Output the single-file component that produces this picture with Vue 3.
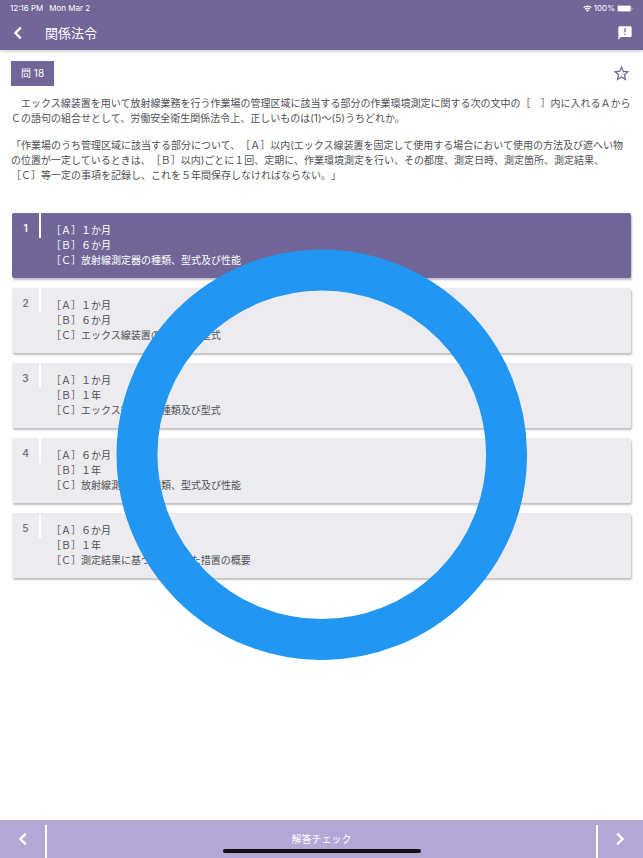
<script setup>
import { ref } from 'vue'

const selected = ref(1)

const choices = [
  { id: 1, lines: ['［Ａ］１か月', '［Ｂ］６か月', '［Ｃ］放射線測定器の種類、型式及び性能'] },
  { id: 2, lines: ['［Ａ］１か月', '［Ｂ］６か月', '［Ｃ］エックス線装置の種類及び型式'] },
  { id: 3, lines: ['［Ａ］１か月', '［Ｂ］１年', '［Ｃ］エックス線装置の種類及び型式'] },
  { id: 4, lines: ['［Ａ］６か月', '［Ｂ］１年', '［Ｃ］放射線測定器の種類、型式及び性能'] },
  { id: 5, lines: ['［Ａ］６か月', '［Ｂ］１年', '［Ｃ］測定結果に基づいて講じた措置の概要'] },
]
</script>

<template>
  <div class="page">
    <header class="header">
      <div class="status">
        <span>12:16 PM</span>
        <span>Mon Mar 2</span>
        <span class="status-right">
          <svg class="wifi" viewBox="0 0 18 14" aria-hidden="true">
            <path d="M1.3 5.2a11 11 0 0 1 15.4 0M4.2 8.4a7 7 0 0 1 9.6 0" fill="none" stroke="currentColor" stroke-width="2.4" />
            <path d="M9 13.6 6 10.6a4.4 4.4 0 0 1 6 0z" fill="currentColor" />
          </svg>
          <span>100%</span>
          <svg class="battery" viewBox="0 0 32 14" aria-hidden="true">
            <rect x=".5" y=".5" width="28" height="13" rx="3.5" fill="none" stroke="currentColor" opacity=".5" />
            <rect x="1.5" y="1.5" width="26" height="11" rx="2.5" fill="currentColor" />
            <path d="M30 4.5c2 .6 2 4.4 0 5z" fill="currentColor" opacity=".5" />
          </svg>
        </span>
      </div>
      <div class="toolbar">
        <button class="icon-button" type="button" aria-label="戻る">
          <svg class="chevron" viewBox="0 0 14 14" aria-hidden="true"><path d="M9.8 1.6 4.4 7l5.4 5.4" /></svg>
        </button>
        <h1 class="title">関係法令</h1>
        <button class="icon-button report" type="button" aria-label="報告">
          <svg viewBox="0 0 24 24" aria-hidden="true">
            <path fill="currentColor" d="M20 2H4c-1.1 0-1.99.9-1.99 2L2 22l4-4h14c1.1 0 2-.9 2-2V4c0-1.1-.9-2-2-2zm-7 9h-2V5h2v6zm0 4h-2v-2h2v2z" />
          </svg>
        </button>
      </div>
    </header>

    <main class="content">
      <div class="question-head">
        <span class="badge">問 18</span>
        <button class="icon-button star" type="button" aria-label="お気に入り">
          <svg viewBox="0 0 24 24" aria-hidden="true">
            <path fill="currentColor" d="M22 9.24l-7.19-.62L12 2 9.19 8.63 2 9.24l5.46 4.73L5.82 21 12 17.27 18.18 21l-1.63-7.03L22 9.24zM12 15.4l-3.76 2.27 1-4.28-3.32-2.88 4.38-.38L12 6.1l1.71 4.04 4.38.38-3.32 2.88 1 4.28L12 15.4z" />
          </svg>
        </button>
      </div>

      <div class="question">
        <p>　エックス線装置を用いて放射線業務を行う作業場の管理区域に該当する部分の作業環境測定に関する次の文中の［　］内に入れるＡから<br>Ｃの語句の組合せとして、労働安全衛生関係法令上、正しいものは(1)〜(5)うちどれか。</p>
        <p>「作業場のうち管理区域に該当する部分について、［Ａ］以内(エックス線装置を固定して使用する場合において使用の方法及び遮へい物<br>の位置が一定しているときは、［Ｂ］以内)ごとに１回、定期に、作業環境測定を行い、その都度、測定日時、測定箇所、測定結果、<br>［Ｃ］等一定の事項を記録し、これを５年間保存しなければならない。」</p>
      </div>

      <div class="choices">
        <button
          v-for="choice in choices"
          :key="choice.id"
          type="button"
          class="choice"
          :class="{ selected: choice.id === selected }"
          :aria-pressed="choice.id === selected"
          @click="selected = choice.id"
        >
          <span class="number">{{ choice.id }}</span>
          <span class="answer">
            <span v-for="line in choice.lines" :key="line" class="line">{{ line }}</span>
          </span>
        </button>
      </div>
    </main>

    <footer class="footer">
      <button class="nav" type="button" aria-label="前の問題">
        <svg class="chevron" viewBox="0 0 14 14" aria-hidden="true"><path d="M9.8 1.6 4.4 7l5.4 5.4" /></svg>
      </button>
      <button class="check" type="button">解答チェック</button>
      <button class="nav" type="button" aria-label="次の問題">
        <svg class="chevron" viewBox="0 0 14 14" aria-hidden="true"><path d="M3.2 1.6 8.6 7l-5.4 5.4" /></svg>
      </button>
      <span class="home-indicator"></span>
    </footer>

    <div class="result">
      <svg class="ring" viewBox="0 0 412 412" role="img" aria-label="正解">
        <circle cx="206" cy="206" r="185" fill="none" stroke="#2196f3" stroke-width="41" />
      </svg>
    </div>
  </div>
</template>

<style>
body {
  margin: 0;
  background: #fff;
}
</style>

<style scoped>
.page {
  position: relative;
  display: flex;
  flex-direction: column;
  min-height: 100vh;
  font-family: Inter, "Noto Sans CJK JP", sans-serif;
  font-size: 10px;
  line-height: 15px;
  color: #505054;
  text-spacing-trim: space-all;
}

button {
  margin: 0;
  padding: 0;
  border: 0;
  background: none;
  color: inherit;
  font: inherit;
  cursor: pointer;
}

svg {
  display: block;
}

.header {
  background: #716697;
  color: #fff;
  box-shadow: 0 1px 3px rgba(0, 0, 0, 0.25);
}

.status {
  display: flex;
  align-items: center;
  gap: 6px;
  height: 16px;
  padding: 0 10px;
  font-size: 8px;
}

.status-right {
  display: flex;
  align-items: center;
  gap: 2px;
  margin-left: auto;
}

.wifi {
  width: 9px;
  height: 7px;
}

.battery {
  width: 16px;
  height: 7px;
}

.toolbar {
  display: flex;
  align-items: center;
  height: 34px;
  padding: 0 10px 0 11px;
}

.icon-button {
  display: flex;
  align-items: center;
  justify-content: center;
}

.chevron {
  width: 14px;
  height: 14px;
  fill: none;
  stroke: currentColor;
  stroke-width: 2.4;
}

.title {
  margin: 0 auto 0 20px;
  font-size: 13px;
  font-weight: 400;
  line-height: 20px;
}

.report svg {
  width: 16px;
  height: 16px;
}

.content {
  flex: 1;
  padding: 11px 12px 20px 11px;
}

.question-head {
  display: flex;
  align-items: center;
  justify-content: space-between;
}

.badge {
  padding: 5px 10px;
  background: #716697;
  color: #fff;
}

.star {
  color: #716697;
}

.star svg {
  width: 19px;
  height: 19px;
}

.question {
  padding-top: 10px;
}

.question p {
  margin: 0 0 12px;
  white-space: nowrap;
}

.choices {
  display: flex;
  flex-direction: column;
  gap: 10px;
  padding: 18px 0 0 1px;
}

.choice {
  display: flex;
  align-items: flex-start;
  border-radius: 2px;
  background: #ecebf0;
  box-shadow: 1px 2px 2px rgba(0, 0, 0, 0.25);
  text-align: left;
}

.number {
  box-sizing: border-box;
  width: 29px;
  height: 25px;
  padding-top: 8px;
  border-right: 2px solid #fff;
  color: #77767c;
  font-weight: 600;
  text-align: center;
}

.answer {
  padding: 10px;
}

.line {
  display: block;
}

.selected {
  background: #716697;
  color: #fff;
}

.selected .number {
  color: #fff;
}

.footer {
  position: relative;
  display: flex;
  align-items: flex-end;
  height: 38px;
  background: #b3a7d6;
  color: #fff;
}

.nav {
  display: flex;
  align-items: center;
  justify-content: center;
  width: 45px;
  height: 33px;
  padding-bottom: 5px;
}

.check {
  flex: 1;
  height: 33px;
  padding-bottom: 5px;
  border: solid #fff;
  border-width: 0 2px;
}

.home-indicator {
  position: absolute;
  bottom: 5px;
  left: 50%;
  width: 198px;
  height: 4px;
  border-radius: 2px;
  background: #111;
  transform: translateX(-50%);
}

.result {
  position: absolute;
  inset: 51px 0 0;
  display: flex;
  align-items: center;
  justify-content: center;
  pointer-events: none;
}

.ring {
  width: 64%;
}
</style>
